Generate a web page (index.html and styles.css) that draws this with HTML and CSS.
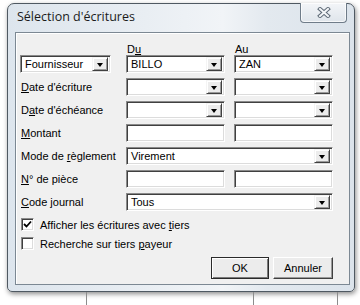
FILE: index.html
```html
<!DOCTYPE html>
<html lang="fr">
<head>
    <meta charset="UTF-8">
    <meta name="viewport" content="width=device-width, initial-scale=1.0">
    <title>Sélection d'écritures</title>
    <link rel="stylesheet" href="styles.css">
</head>
<body>

    <div class="window">
        <div class="titlebar">
            <span class="title">Sélection d'écritures</span>
            <span class="close">
                <svg width="14" height="11" viewBox="0 0 14 11">
                    <path d="M3 2 L11 9 M11 2 L3 9" stroke="#5f6b78" stroke-width="4" stroke-linecap="square" fill="none"/>
                    <path d="M3 2 L11 9 M11 2 L3 9" stroke="#f4f6f8" stroke-width="2" stroke-linecap="square" fill="none"/>
                </svg>
            </span>
        </div>

        <div class="client">
            <div class="heads">
                <span></span>
                <span class="head">D<u>u</u></span>
                <span class="head">Au</span>
            </div>

            <div class="fields">
                <div class="combo small"><span class="val">Fournisseur</span><span class="drop"></span></div>
                <div class="combo"><span class="val">BILLO</span><span class="drop"></span></div>
                <div class="combo"><span class="val">ZAN</span><span class="drop"></span></div>

                <label class="label"><u>D</u>ate d'écriture</label>
                <div class="combo"><span class="val"></span><span class="drop"></span></div>
                <div class="combo"><span class="val"></span><span class="drop"></span></div>

                <label class="label">D<u>a</u>te d'échéance</label>
                <div class="combo"><span class="val"></span><span class="drop"></span></div>
                <div class="combo"><span class="val"></span><span class="drop"></span></div>

                <label class="label"><u>M</u>ontant</label>
                <div class="edit"></div>
                <div class="edit"></div>

                <label class="label">Mode de <u>r</u>èglement</label>
                <div class="combo wide"><span class="val">Virement</span><span class="drop"></span></div>

                <label class="label"><u>N</u>° de pièce</label>
                <div class="edit"></div>
                <div class="edit"></div>

                <label class="label"><u>C</u>ode journal</label>
                <div class="combo wide"><span class="val">Tous</span><span class="drop"></span></div>
            </div>

            <div class="checks">
                <div class="check">
                    <span class="box">
                        <svg width="9" height="9" viewBox="0 0 9 9">
                            <path d="M1 4 L3.5 6.5 L8 1.5" stroke="#000" stroke-width="1.8" fill="none"/>
                        </svg>
                    </span>
                    <span>Afficher les écritures avec <u>t</u>iers</span>
                </div>
                <div class="check">
                    <span class="box"></span>
                    <span>Recherche sur tiers <u>p</u>ayeur</span>
                </div>
            </div>

            <div class="actions">
                <span class="btn default">OK</span>
                <span class="btn">Annuler</span>
            </div>
        </div>
    </div>

    <div class="behind">
        <span class="cell c1"></span>
        <span class="cell c2"></span>
        <span class="cell c3"></span>
    </div>

</body>
</html>
```

FILE: styles.css
```css
* {
    margin: 0;
    padding: 0;
    box-sizing: border-box;
}
body {
    background: #fff;
    font-family: "Liberation Sans", Arial, sans-serif;
    font-size: 11px;
    color: #000;
    width: 360px;
    height: 305px;
    overflow: hidden;
}
u {
    text-decoration: underline;
    text-underline-offset: 1px;
}

/* window frame */
.window {
    margin: 3px 0 0 7px;
    width: 348px;
    height: 289px;
    border: 1px solid #4f5962;
    border-radius: 7px 7px 5px 5px;
    background: linear-gradient(90deg, #dde5ed 0%, #e9eef3 40%, #f1f4f7 62%, #e3e9ef 75%, #dbe3eb 100%);
    box-shadow: 1px 2px 5px rgba(0, 0, 0, 0.45);
    padding: 0 4px 6px 7px;
    display: flex;
    flex-direction: column;
}
.titlebar {
    height: 28px;
    display: flex;
    justify-content: space-between;
    align-items: flex-start;
}
.title {
    font-family: "Open Sans", "Noto Sans", sans-serif;
    font-size: 12.5px;
    line-height: 16px;
    padding: 5px 0 0 2px;
    color: #1b1b1b;
}
.close {
    width: 47px;
    height: 20px;
    margin: -1px 3px 0 0;
    border: 1px solid #6f7c89;
    border-top: none;
    border-radius: 0 0 4px 4px;
    background: linear-gradient(#f3f5f8, #dfe5eb);
    box-shadow: inset 0 0 0 1px rgba(255, 255, 255, 0.7);
    display: flex;
    justify-content: center;
    align-items: center;
}

/* client area */
.client {
    flex: 1;
    border: 1px solid #7c8893;
    background: #f0f0f0;
    box-shadow: inset 1px 1px 0 #fff;
    padding: 10px 16px 5px 4px;
    display: flex;
    flex-direction: column;
}
.heads,
.fields {
    display: grid;
    grid-template-columns: 97px 99px 99px;
    column-gap: 9px;
}
.head {
    line-height: 12px;
    padding-left: 1px;
}
.fields {
    grid-auto-rows: 18px;
    row-gap: 5px;
}
.label {
    line-height: 18px;
    padding-left: 1px;
    white-space: nowrap;
}

/* sunken fields */
.combo,
.edit,
.box {
    background: #fff;
    border: 1px solid;
    border-color: #8a8a8a #fff #fff #8a8a8a;
    box-shadow: inset 1px 1px 0 #404040, inset -1px -1px 0 #dcdcdc;
}
.combo {
    display: flex;
    align-items: center;
    justify-content: space-between;
    padding: 1px 2px 1px 2px;
}
.combo.small {
    width: 91px;
}
.combo.wide {
    grid-column: 2 / 4;
}
.val {
    padding-left: 2px;
    line-height: 14px;
    white-space: nowrap;
}
.drop {
    width: 16px;
    height: 14px;
    background: #ececec;
    border: 1px solid;
    border-color: #f4f4f4 #404040 #404040 #f4f4f4;
    box-shadow: inset 1px 1px 0 #fff, inset -1px -1px 0 #9a9a9a;
    display: flex;
    justify-content: center;
    align-items: center;
}
.drop::after {
    content: "";
    border-left: 3px solid transparent;
    border-right: 3px solid transparent;
    border-top: 4px solid #000;
    margin-top: 1px;
}

/* checkboxes */
.checks {
    margin-top: 7px;
    display: flex;
    flex-direction: column;
    gap: 6px;
}
.check {
    display: flex;
    align-items: center;
    gap: 6px;
    padding-left: 1px;
    height: 13px;
}
.box {
    width: 13px;
    height: 13px;
    display: flex;
    justify-content: center;
    align-items: center;
}

/* buttons */
.actions {
    margin-top: auto;
    display: flex;
    justify-content: flex-end;
    gap: 4px;
}
.btn {
    height: 22px;
    background: #ececec;
    border: 1px solid;
    border-color: #fff #404040 #404040 #fff;
    box-shadow: inset -1px -1px 0 #9a9a9a;
    display: flex;
    justify-content: center;
    align-items: center;
    width: 60px;
}
.btn.default {
    width: 58px;
    border: 1px solid #2a2a2a;
    box-shadow: inset 1px 1px 0 #fff, inset -1px -1px 0 #7a7a7a;
}

/* table lines behind the window */
.behind {
    display: flex;
    height: 14px;
}
.cell {
    border-right: 1px solid #8c8c8c;
}
.c1 {
    width: 87px;
}
.c2 {
    width: 167px;
}
.c3 {
    width: 84px;
}
```
